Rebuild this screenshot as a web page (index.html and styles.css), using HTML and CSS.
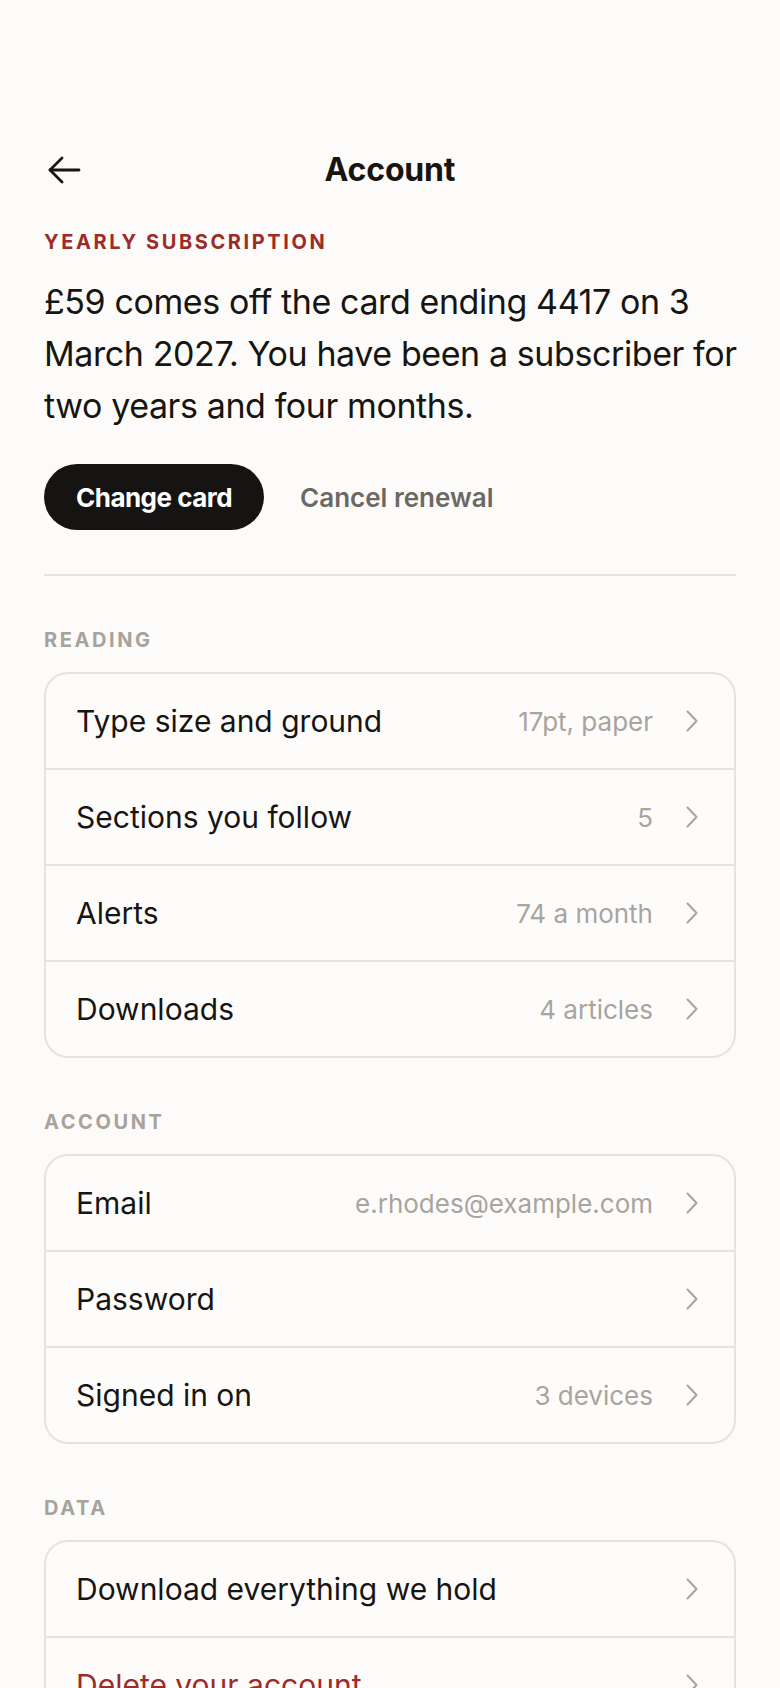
FILE: index.html
```html
<!DOCTYPE html>
<html lang="en">
<head>
<meta charset="utf-8">
<title>Account</title>
<link rel="stylesheet" href="styles.css">
</head>
<body>
<div class="page">
  <header class="topbar">
    <button class="back" aria-label="Back">
      <svg width="34" height="28" viewBox="0 0 34 28" fill="none" stroke="#171512" stroke-width="2.8" stroke-linecap="round" stroke-linejoin="round"><path d="M32 14H3"/><path d="M15 2L3 14l12 12"/></svg>
    </button>
    <h1 class="title">Account</h1>
    <span class="spacer"></span>
  </header>

  <section class="subscription">
    <p class="eyebrow">Yearly subscription</p>
    <p class="summary">£59 comes off the card ending 4417 on 3 March 2027. You have been a subscriber for two years and four months.</p>
    <div class="actions">
      <button class="btn-primary">Change card</button>
      <button class="btn-link">Cancel renewal</button>
    </div>
  </section>

  <hr class="rule">

  <h2 class="group-label">Reading</h2>
  <ul class="card">
    <li class="row"><span class="row-label">Type size and ground</span><span class="row-value">17pt, paper</span><svg class="chev" width="12" height="22" viewBox="0 0 12 22" fill="none" stroke="#a8a49e" stroke-width="2" stroke-linecap="round" stroke-linejoin="round"><path d="M1.5 1.5L10.5 11l-9 9.5"/></svg></li>
    <li class="row"><span class="row-label">Sections you follow</span><span class="row-value">5</span><svg class="chev" width="12" height="22" viewBox="0 0 12 22" fill="none" stroke="#a8a49e" stroke-width="2" stroke-linecap="round" stroke-linejoin="round"><path d="M1.5 1.5L10.5 11l-9 9.5"/></svg></li>
    <li class="row"><span class="row-label">Alerts</span><span class="row-value">74 a month</span><svg class="chev" width="12" height="22" viewBox="0 0 12 22" fill="none" stroke="#a8a49e" stroke-width="2" stroke-linecap="round" stroke-linejoin="round"><path d="M1.5 1.5L10.5 11l-9 9.5"/></svg></li>
    <li class="row"><span class="row-label">Downloads</span><span class="row-value">4 articles</span><svg class="chev" width="12" height="22" viewBox="0 0 12 22" fill="none" stroke="#a8a49e" stroke-width="2" stroke-linecap="round" stroke-linejoin="round"><path d="M1.5 1.5L10.5 11l-9 9.5"/></svg></li>
  </ul>

  <h2 class="group-label">Account</h2>
  <ul class="card">
    <li class="row"><span class="row-label">Email</span><span class="row-value">e.rhodes@example.com</span><svg class="chev" width="12" height="22" viewBox="0 0 12 22" fill="none" stroke="#a8a49e" stroke-width="2" stroke-linecap="round" stroke-linejoin="round"><path d="M1.5 1.5L10.5 11l-9 9.5"/></svg></li>
    <li class="row"><span class="row-label">Password</span><span class="row-value"></span><svg class="chev" width="12" height="22" viewBox="0 0 12 22" fill="none" stroke="#a8a49e" stroke-width="2" stroke-linecap="round" stroke-linejoin="round"><path d="M1.5 1.5L10.5 11l-9 9.5"/></svg></li>
    <li class="row"><span class="row-label">Signed in on</span><span class="row-value">3 devices</span><svg class="chev" width="12" height="22" viewBox="0 0 12 22" fill="none" stroke="#a8a49e" stroke-width="2" stroke-linecap="round" stroke-linejoin="round"><path d="M1.5 1.5L10.5 11l-9 9.5"/></svg></li>
  </ul>

  <h2 class="group-label">Data</h2>
  <ul class="card">
    <li class="row"><span class="row-label">Download everything we hold</span><span class="row-value"></span><svg class="chev" width="12" height="22" viewBox="0 0 12 22" fill="none" stroke="#a8a49e" stroke-width="2" stroke-linecap="round" stroke-linejoin="round"><path d="M1.5 1.5L10.5 11l-9 9.5"/></svg></li>
    <li class="row"><span class="row-label danger">Delete your account</span><span class="row-value"></span><svg class="chev" width="12" height="22" viewBox="0 0 12 22" fill="none" stroke="#a8a49e" stroke-width="2" stroke-linecap="round" stroke-linejoin="round"><path d="M1.5 1.5L10.5 11l-9 9.5"/></svg></li>
  </ul>
</div>
</body>
</html>
```

FILE: styles.css
```css
* { box-sizing: border-box; }

html, body {
  margin: 0;
  padding: 0;
  background: #fcfbf9;
}

body {
  font-family: Inter, "Noto Sans", "Liberation Sans", sans-serif;
  color: #171512;
  -webkit-font-smoothing: antialiased;
}

.page {
  padding: 140px 44px 80px;
}

.topbar {
  display: grid;
  grid-template-columns: 1fr auto 1fr;
  align-items: center;
  height: 60px;
}

.back {
  justify-self: start;
  display: flex;
  align-items: center;
  background: none;
  border: 0;
  padding: 0;
  margin-left: 3px;
  cursor: pointer;
}

.title {
  margin: 0;
  font-size: 32px;
  font-weight: 700;
  letter-spacing: -0.005em;
  line-height: 40px;
}

.subscription {
  margin-top: 30px;
}

.eyebrow {
  margin: 0;
  font-size: 20px;
  line-height: 24px;
  font-weight: 700;
  letter-spacing: 0.13em;
  text-transform: uppercase;
  color: #9c2b29;
}

.summary {
  margin: 22px -10px 0 0;
  font-size: 34px;
  line-height: 52px;
  font-weight: 400;
  letter-spacing: -0.012em;
}

.actions {
  display: flex;
  align-items: center;
  gap: 36px;
  margin-top: 32px;
}

.btn-primary {
  height: 66px;
  padding: 0 32px;
  border: 0;
  border-radius: 33px;
  background: #161412;
  color: #ffffff;
  font-family: inherit;
  font-size: 26px;
  font-weight: 700;
  letter-spacing: -0.02em;
}

.btn-link {
  background: none;
  border: 0;
  padding: 0;
  font-family: inherit;
  font-size: 26px;
  font-weight: 600;
  color: #6b6863;
}

.rule {
  margin: 44px 0 0;
  border: 0;
  height: 2px;
  background: #e6e3de;
}

.group-label {
  margin: 52px 0 20px;
  font-size: 20px;
  line-height: 24px;
  font-weight: 700;
  letter-spacing: 0.13em;
  text-transform: uppercase;
  color: #a7a39c;
}

.card {
  list-style: none;
  margin: 0;
  padding: 0;
  border: 2px solid #e6e3de;
  border-radius: 24px;
  background: #fdfcfb;
  overflow: hidden;
}

.row {
  display: flex;
  align-items: center;
  height: 94px;
  padding: 0 36px 0 30px;
}

.row + .row {
  height: 96px;
  border-top: 2px solid #e6e3de;
}

.row-label {
  flex: 1;
  font-size: 30px;
  font-weight: 400;
  color: #171512;
}

.row-label.danger {
  color: #9c2b29;
}

.row-value {
  font-size: 26px;
  color: #a8a49e;
  margin-right: 33px;
}

.chev {
  flex: none;
  display: block;
}
```
